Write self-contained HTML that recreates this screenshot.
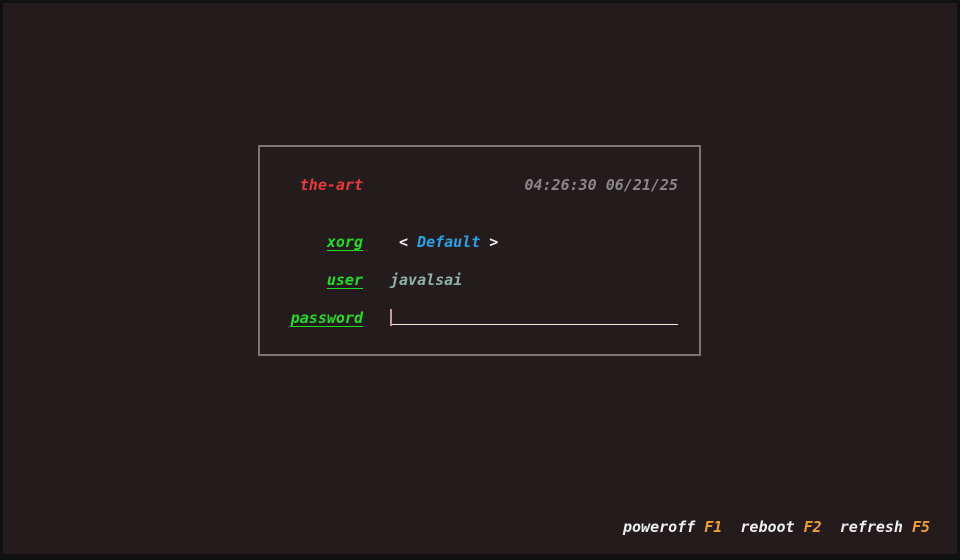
<!DOCTYPE html>
<html><head><meta charset="utf-8"><style>
html,body{margin:0;padding:0;}
body{width:960px;height:560px;background:#111111;position:relative;overflow:hidden;
font-family:"DejaVu Sans Mono","Liberation Mono",monospace;font-style:italic;font-size:15px;font-weight:bold;}
#bg{position:absolute;left:3px;top:3px;width:954px;height:551px;background:#241c1c;}
#box{position:absolute;left:258px;top:145px;width:439px;height:207px;border:2px solid #7a7676;}
.t{position:absolute;white-space:pre;line-height:18px;}
.r{text-align:right;}
.g{color:#22dd22;text-decoration:underline;text-underline-offset:3px;}
</style></head><body>
<div id="bg"></div>
<div id="box"></div>
<div class="t r" style="right:597px;top:176px;color:#e83a3a;">the-art</div>
<div class="t r" style="right:282px;top:176px;color:#8a8888;">04:26:30 06/21/25</div>
<div class="t r g" style="right:597px;top:233px;">xorg</div>
<div class="t" style="left:399px;top:233px;color:#f0f0f0;font-style:normal;">&lt; <span style="color:#2aa2ea;font-style:italic;">Default</span> &gt;</div>
<div class="t r g" style="right:597px;top:271px;">user</div>
<div class="t" style="left:390px;top:271px;color:#8fb2aa;">javalsai</div>
<div class="t r g" style="right:597px;top:309px;">password</div>
<div style="position:absolute;left:390px;top:309px;width:2px;height:17px;background:#c89a9a;"></div>
<div style="position:absolute;left:392px;top:324px;width:286px;height:1px;background:#f4e8d8;"></div>
<div class="t" style="left:623px;top:518px;color:#f0f0f0;">poweroff <span style="color:#f0a030">F1</span>  reboot <span style="color:#f0a030">F2</span>  refresh <span style="color:#f0a030">F5</span></div>
</body></html>
